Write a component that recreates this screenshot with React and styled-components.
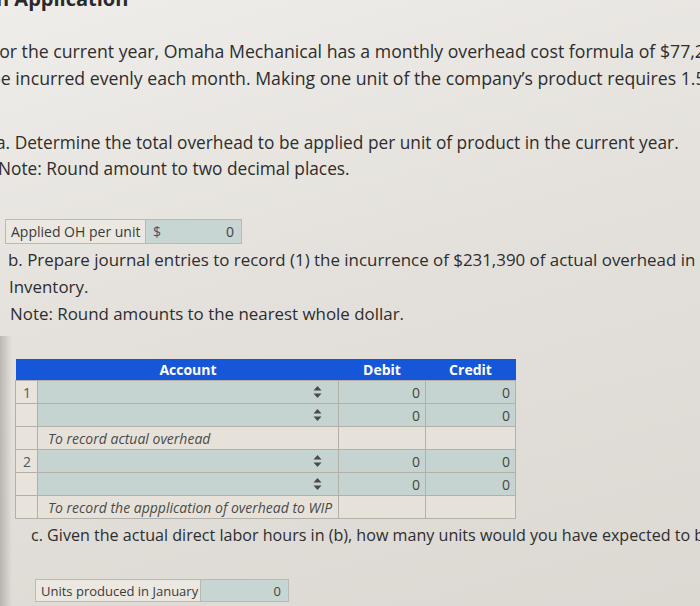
import React from "react";
import styled, { createGlobalStyle } from "styled-components";

const GlobalStyle = createGlobalStyle`
    html, body {
        margin: 0;
        padding: 0;
    }
    body {
        width: 700px;
        height: 606px;
        overflow: hidden;
        font-family: "Open Sans", "DejaVu Sans", sans-serif;
        color: #2d2d2d;
        background:
            linear-gradient(90deg, rgba(110, 105, 100, 0.35) 0, rgba(110, 105, 100, 0) 12px) left bottom / 12px 270px no-repeat,
            linear-gradient(165deg, #efedea 0%, #e4e1dc 45%, #dcd8d2 100%);
    }
`;

const Page = styled.div`
    width: 700px;
    height: 606px;
    overflow: hidden;
    display: flex;
    flex-direction: column;
    align-items: flex-start;
`;

const Heading = styled.h2`
    margin: -13px 0 0 -4px;
    font-size: 20px;
    line-height: 24px;
    font-weight: 700;
    color: #2a2a2a;
    white-space: nowrap;
`;

const Para = styled.div`
    margin: ${(p) => p.$mt}px 0 0 ${(p) => p.$ml}px;
    font-size: ${(p) => p.$size}px;
    line-height: ${(p) => p.$lh}px;
    white-space: nowrap;
`;

const Line = styled.span`
    display: block;
    margin-left: ${(p) => p.$indent || 0}px;
`;

const Field = styled.div`
    display: flex;
    margin: ${(p) => p.$mt}px 0 0 ${(p) => p.$ml}px;
    height: ${(p) => p.$h}px;
    border: 1px solid #bdb9b2;
    font-size: ${(p) => p.$size}px;
    white-space: nowrap;
`;

const FieldLabel = styled.div`
    width: ${(p) => p.$w}px;
    box-sizing: border-box;
    padding-left: 5px;
    display: flex;
    align-items: center;
    background: #ebe8e2;
    border-right: 1px solid #bdb9b2;
    color: #3a3a3a;
`;

const FieldInput = styled.div`
    width: ${(p) => p.$w}px;
    box-sizing: border-box;
    padding: 0 7px;
    display: flex;
    align-items: center;
    justify-content: ${(p) => (p.$end ? "flex-end" : "space-between")};
    background: #c7d5d3;
    color: #444;
`;

const Dollar = styled.span`
    color: #3d5272;
`;

const Table = styled.table`
    margin: 32px 0 0 15px;
    border-collapse: collapse;
    table-layout: fixed;
    font-size: 14px;
`;

const Th = styled.th`
    width: ${(p) => p.$w}px;
    height: 21px;
    padding: 0;
    background: #1656d8;
    color: #fff;
    font-weight: 700;
    font-size: 14px;
    text-align: center;
`;

const Td = styled.td`
    height: 22px;
    padding: 0;
    border: 1px solid #b3b0aa;
    background: ${(p) => (p.$input ? "#c6d4d1" : "#e6e2da")};
    color: #454545;
`;

const NumCell = styled(Td)`
    padding-left: 7px;
    background: #e8e4dc;
    color: #555;
`;

const AccountCell = styled(Td)`
    text-align: right;
    padding-right: 16px;
    line-height: 0;
`;

const AmountCell = styled(Td)`
    text-align: right;
    padding-right: 5px;
`;

const NoteCell = styled(Td)`
    padding-left: 10px;
    font-style: italic;
    color: #4a4a4a;
    white-space: nowrap;
`;

const SortIcon = () => (
    <svg width="9" height="12" viewBox="0 0 9 12">
        <path d="M4.5 0 L8.5 4.6 H0.5 Z" fill="#4a4a4a" />
        <path d="M0.5 7.4 H8.5 L4.5 12 Z" fill="#4a4a4a" />
    </svg>
);

const EntryRow = ({ num }) => (
    <tr>
        <NumCell>{num}</NumCell>
        <AccountCell $input>
            <SortIcon />
        </AccountCell>
        <AmountCell $input>0</AmountCell>
        <AmountCell $input>0</AmountCell>
    </tr>
);

const NoteRow = ({ text }) => (
    <tr>
        <NumCell />
        <NoteCell>{text}</NoteCell>
        <Td />
        <Td />
    </tr>
);

const App = () => (
    <Page>
        <GlobalStyle />
        <Heading>n Application</Heading>

        <Para $mt={27} $ml={-10} $size={17.7} $lh={27}>
            <Line>For the current year, Omaha Mechanical has a monthly overhead cost formula of $77,2</Line>
            <Line>be incurred evenly each month. Making one unit of the company’s product requires 1.5</Line>
        </Para>

        <Para $mt={38} $ml={-4} $size={17.3} $lh={26}>
            <Line>a. Determine the total overhead to be applied per unit of product in the current year.</Line>
            <Line $indent={2}>Note: Round amount to two decimal places.</Line>
        </Para>

        <Field $mt={37} $ml={5} $h={23} $size={14}>
            <FieldLabel $w={140}>Applied OH per unit</FieldLabel>
            <FieldInput $w={95}>
                <Dollar>$</Dollar>
                <span>0</span>
            </FieldInput>
        </Field>

        <Para $mt={2} $ml={8} $size={16.9} $lh={27}>
            <Line>b. Prepare journal entries to record (1) the incurrence of $231,390 of actual overhead in</Line>
            <Line $indent={1}>Inventory.</Line>
            <Line $indent={2}>Note: Round amounts to the nearest whole dollar.</Line>
        </Para>

        <Table>
            <thead>
                <tr>
                    <Th $w={22} />
                    <Th $w={301}>Account</Th>
                    <Th $w={87}>Debit</Th>
                    <Th $w={90}>Credit</Th>
                </tr>
            </thead>
            <tbody>
                <EntryRow num="1" />
                <EntryRow />
                <NoteRow text="To record actual overhead" />
                <EntryRow num="2" />
                <EntryRow />
                <NoteRow text="To record the appplication of overhead to WIP" />
            </tbody>
        </Table>

        <Para $mt={3} $ml={31} $size={16.1} $lh={26}>
            <Line>c. Given the actual direct labor hours in (b), how many units would you have expected to b</Line>
        </Para>

        <Field $mt={31} $ml={35} $h={21} $size={13}>
            <FieldLabel $w={165}>Units produced in January</FieldLabel>
            <FieldInput $w={87} $end>
                <span>0</span>
            </FieldInput>
        </Field>
    </Page>
);

export default App;
